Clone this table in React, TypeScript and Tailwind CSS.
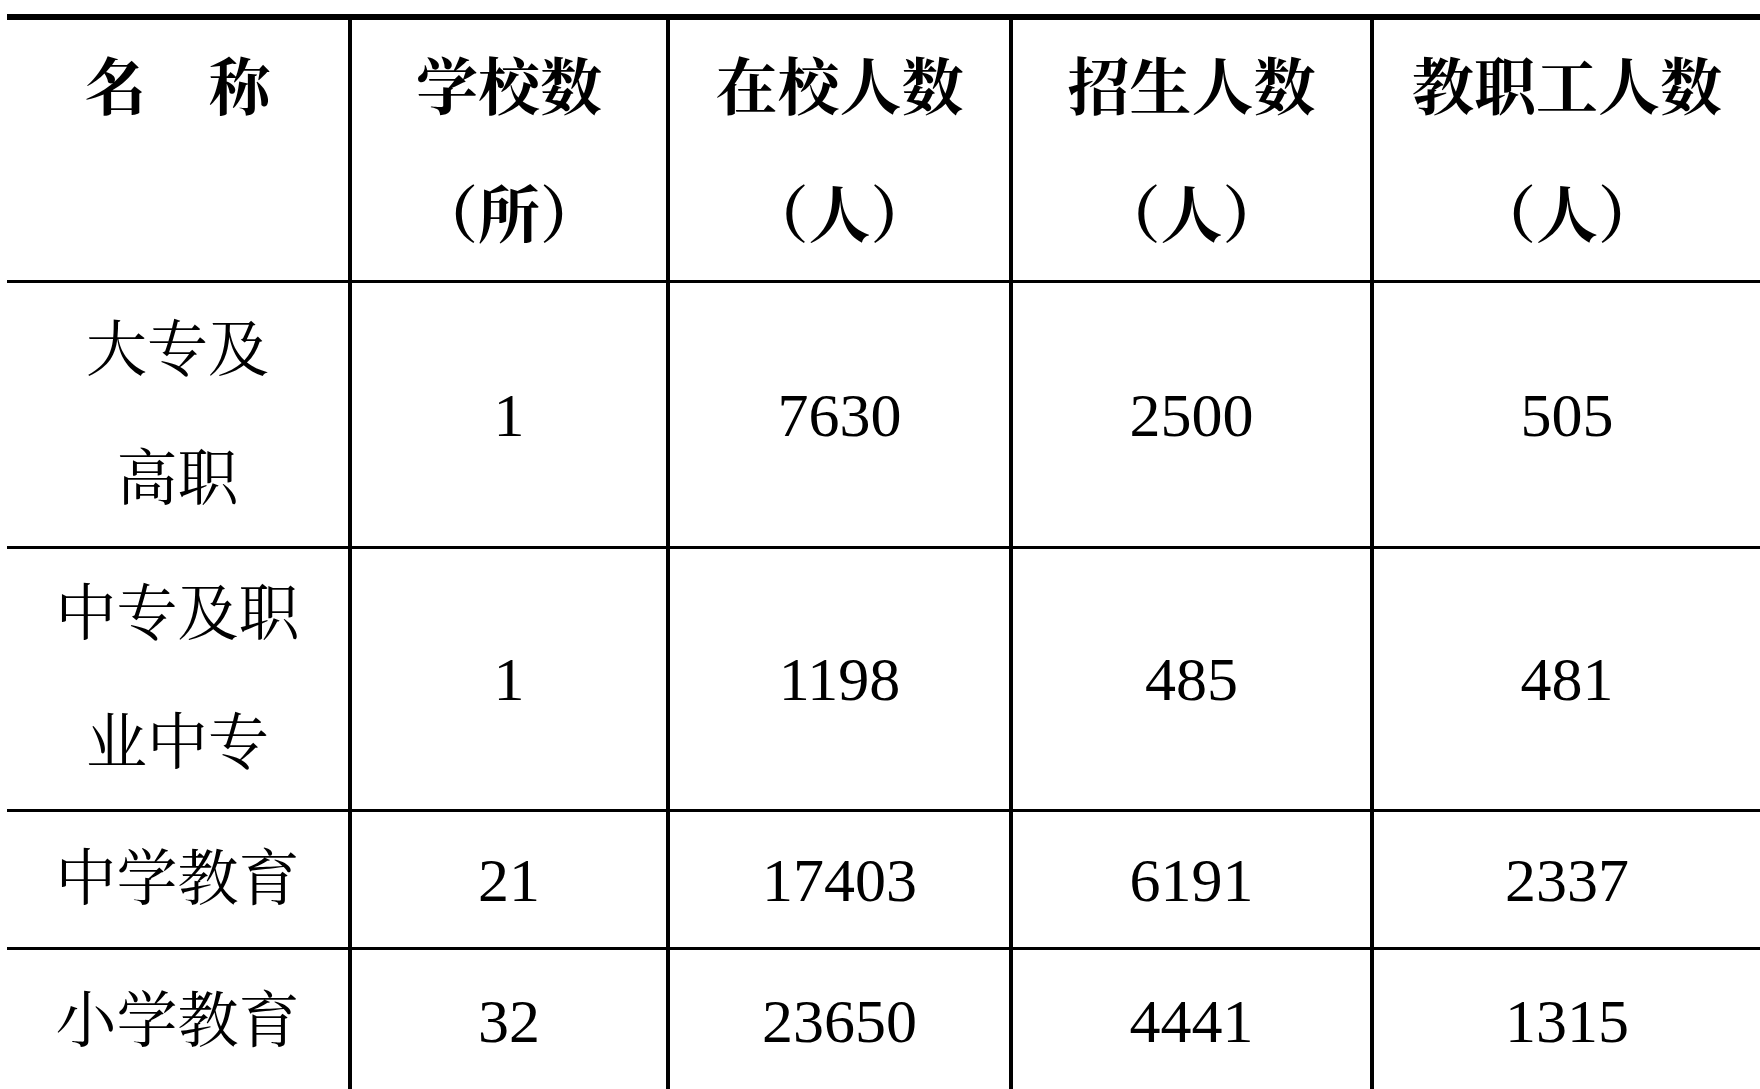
const serif = 'font-["Liberation_Serif","Noto_Serif_CJK_SC","Noto_Sans_CJK_SC",serif]';

type Row = {
  name: string[];
  values: string[];
  height: string;
};

const rows: Row[] = [
  { name: ["大专及", "高职"], values: ["1", "7630", "2500", "505"], height: "h-[266px]" },
  { name: ["中专及职", "业中专"], values: ["1", "1198", "485", "481"], height: "h-[263px]" },
  { name: ["中学教育"], values: ["21", "17403", "6191", "2337"], height: "h-[138px]" },
  { name: ["小学教育"], values: ["32", "23650", "4441", "1315"], height: "h-[142px]" },
];

const widths = ["w-[341px]", "w-[318px]", "w-[343px]", "w-[361px]", "flex-1"];

const headers: string[][] = [
  ["名　称"],
  ["学校数", "（所）"],
  ["在校人数", "（人）"],
  ["招生人数", "（人）"],
  ["教职工人数", "（人）"],
];

function Cell({ index, children }: { index: number; children: React.ReactNode }) {
  return (
    <div
      className={`${widths[index]} ${index > 0 ? "border-l-4 border-black" : ""} flex flex-col items-center justify-center`}
    >
      {children}
    </div>
  );
}

export default function App() {
  return (
    <div className={`min-h-screen w-full overflow-hidden bg-white pl-[7px] pt-[14px] text-black ${serif}`}>
      <div className="border-t-[6px] border-black">
        {/* header */}
        <div className="flex h-[263px] border-b-[3px] border-black">
          {headers.map((lines, i) => (
            <Cell key={i} index={i}>
              <div
                className={`flex h-full flex-col items-center ${i === 0 ? "justify-start pt-[5px]" : "justify-center pt-[6px]"} text-[62px] font-bold leading-[128px]`}
              >
                {lines.map((l) => (
                  <span key={l} className="whitespace-nowrap">
                    {l}
                  </span>
                ))}
              </div>
            </Cell>
          ))}
        </div>
        {rows.map((row, r) => (
          <div
            key={r}
            className={`flex ${row.height} ${r < rows.length - 1 ? "border-b-[3px] border-black" : ""}`}
          >
            <Cell index={0}>
              {row.name.map((l) => (
                <span key={l} className="whitespace-nowrap text-[61px] leading-[129px]">
                  {l}
                </span>
              ))}
            </Cell>
            {row.values.map((v, i) => (
              <Cell key={i} index={i + 1}>
                <span className="text-[62px] leading-none">{v}</span>
              </Cell>
            ))}
          </div>
        ))}
      </div>
    </div>
  );
}
